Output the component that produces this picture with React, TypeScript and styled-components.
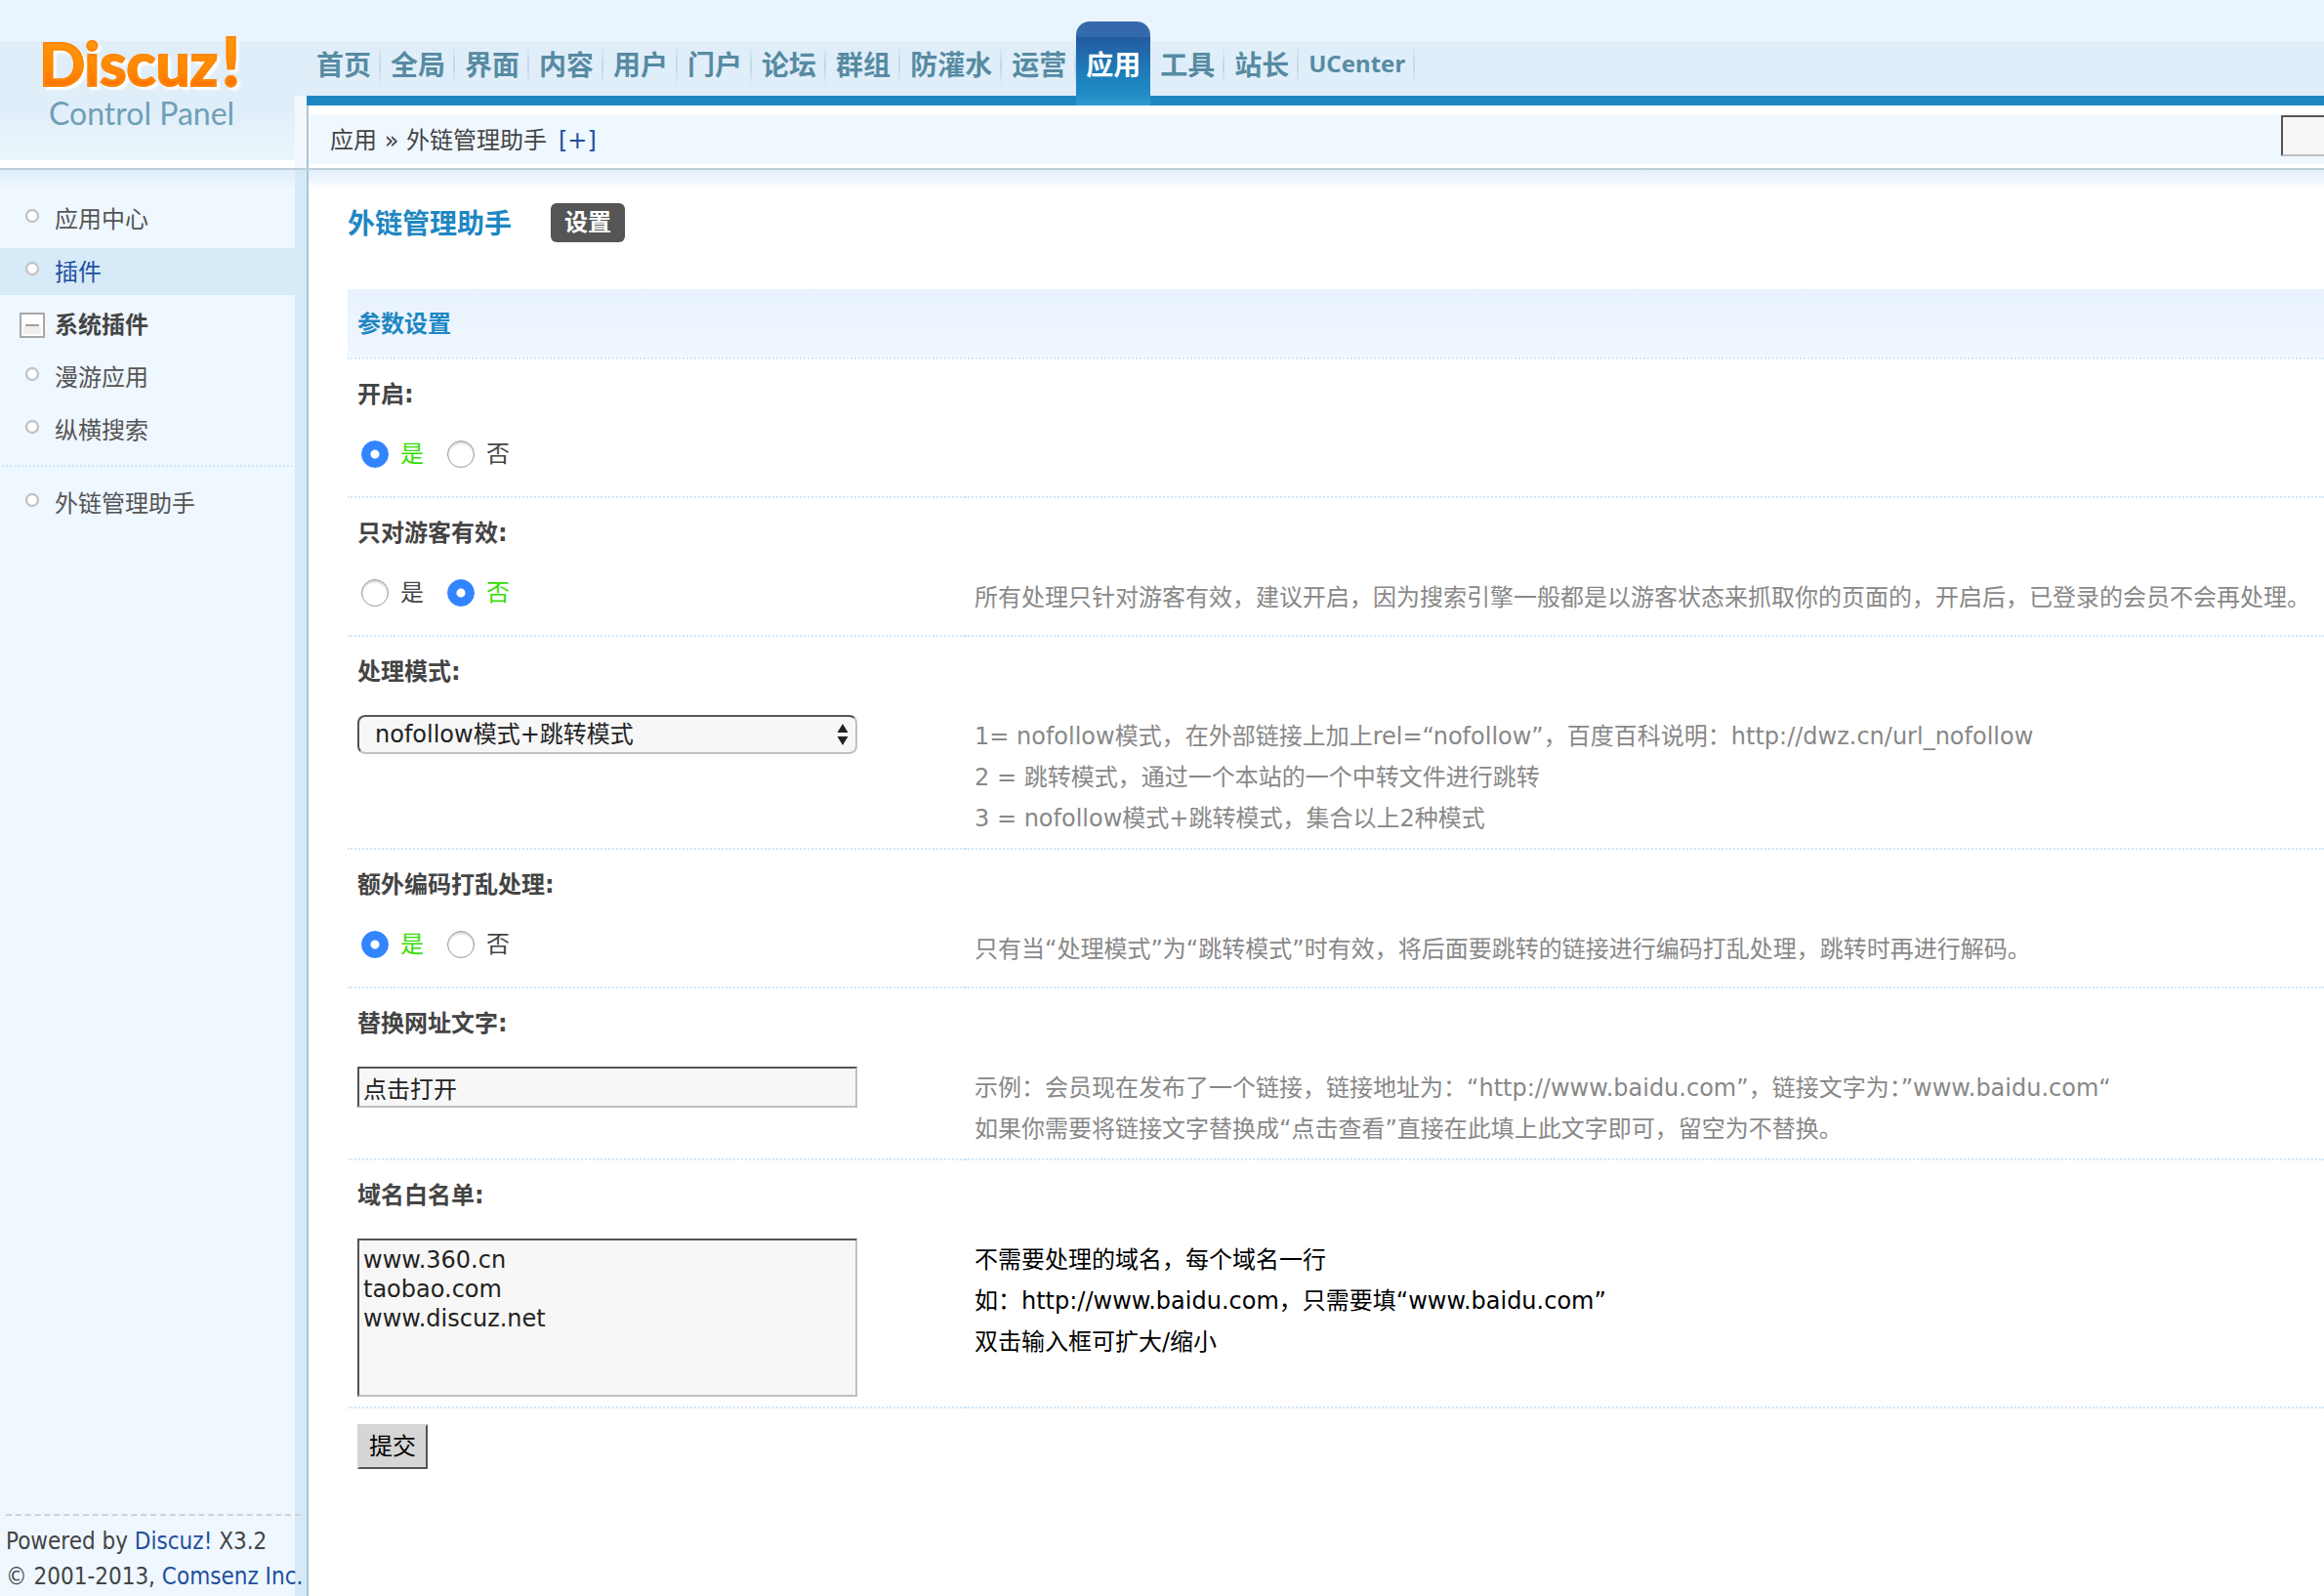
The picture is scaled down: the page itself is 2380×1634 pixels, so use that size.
import React, { useState } from 'react';
import styled, { createGlobalStyle, css } from 'styled-components';

const color = {
  text: '#444444',
  menuText: '#555555',
  link: '#1f4f9f',
  accent: '#1e87c3',
  muted: '#888888',
  nav: '#568ba2',
  line: '#bccfd9',
  edge: '#abc5d3',
  strip: '#d6e9f7',
  panel: '#eff7ff',
  dotted: '#d3e7f6',
};

const GlobalStyle = createGlobalStyle`
  *, *::before, *::after { box-sizing: border-box; }
  body {
    margin: 0;
    overflow-x: hidden;
    background: #ffffff;
    color: ${color.text};
    font-family: 'DejaVu Sans', 'Noto Sans CJK SC', sans-serif;
    font-size: 24px;
    line-height: 36px;
  }
  a { text-decoration: none; color: ${color.link}; }
  ul { list-style: none; margin: 0; padding: 0; }
`;

const cjk = css`
  font-family: 'Noto Sans CJK SC', sans-serif;
`;

const sunken = css`
  border: 2px solid;
  border-color: #545454 #c0c0c0 #c0c0c0 #545454;
  background: #f7f7f7;
  color: #222222;
  font: inherit;
  outline: none;
`;

const Page = styled.div`
  display: flex;
  flex-direction: column;
  min-height: 100vh;
`;

/* ---------- header ---------- */

const Header = styled.header`
  display: grid;
  grid-template-columns: 314px minmax(0, 1fr);
  border-bottom: 2px solid ${color.line};
  background: linear-gradient(#e9f4fd 42px, #e0eefa 42px, #e0eefa 110px, #ebf5fb 164px, #ffffff 164px);
`;

const LogoCell = styled.div`
  padding: 30px 12px 0 40px;
  background: linear-gradient(#f4f8fd, #f4f8fd) right bottom / 12px 74px no-repeat;
`;

const Logo = styled.a`
  display: block;
  font-family: Lato, sans-serif;
  white-space: nowrap;
`;

const LogoName = styled.span`
  display: flex;
  align-items: baseline;
  gap: 4px;
  height: 68px;
  font-size: 62px;
  font-weight: 700;
  line-height: 68px;
  color: transparent;
  background: linear-gradient(#ff960c 10px, #ff8a04 40px, #ff7200 58px);
  -webkit-background-clip: text;
  background-clip: text;
  -webkit-text-stroke: 2px #ff8606;
  filter: drop-shadow(3px 3px 1px #ffffff);
`;

const LogoMark = styled.span`
  font-size: 68px;
  line-height: 60px;
`;

const LogoTag = styled.span`
  display: block;
  padding-left: 10px;
  font-size: 32px;
  line-height: 36px;
  color: #6f9fb6;
`;

const Nav = styled.nav`
  height: 108px;
  background: linear-gradient(${color.accent}, ${color.accent}) left bottom / 100% 10px no-repeat;
`;

const NavList = styled.ul`
  display: flex;
  padding-top: 22px;
`;

const NavLink = styled.a<{ $active?: boolean; $latin?: boolean }>`
  display: block;
  height: 86px;
  padding: 0 10px;
  font-family: ${(p) => (p.$latin ? "'Noto Sans', sans-serif" : "'Noto Sans CJK SC', sans-serif")};
  font-size: ${(p) => (p.$latin ? '24px' : '28px')};
  font-weight: 700;
  line-height: 86px;
  white-space: nowrap;
  color: ${(p) => (p.$active ? '#ffffff' : color.nav)};
  border-radius: ${(p) => (p.$active ? '14px 14px 0 0' : '0')};
  background: ${(p) =>
    p.$active
      ? 'linear-gradient(#346aab 16px, #235ba0 16px, #1d80bd 56px, #1d88c2 70px, #309bd0)'
      : 'linear-gradient(#e0eefa, #c0d6e3 50%, #e0eefa) right 24px / 2px 42px no-repeat'};
`;

const CrumbBar = styled.div`
  display: flex;
  height: 64px;
  padding: 10px 0 4px 2px;
  background: #ffffff;
  border-left: 2px solid ${color.edge};
`;

const Crumbs = styled.div`
  flex: 1;
  padding-left: 20px;
  background: ${color.panel};
  line-height: 52px;
`;

const CrumbAdd = styled.a`
  margin-left: 12px;
`;

const SearchSlot = styled.form`
  flex: 0 0 44px;
  overflow: hidden;
  background: ${color.panel};
`;

const SearchInput = styled.input`
  ${sunken}
  display: block;
  width: 280px;
  height: 42px;
`;

/* ---------- sidebar ---------- */

const Body = styled.div`
  flex: 1;
  display: grid;
  grid-template-columns: 316px minmax(0, 1fr);
`;

const Sidebar = styled.aside`
  display: flex;
  flex-direction: column;
  padding-top: 23px;
  border-right: 2px solid ${color.edge};
  background:
    linear-gradient(${color.strip}, ${color.strip}) right top / 12px 100% no-repeat,
    linear-gradient(#e0eefa, #eff7ff 20px);
`;

const MenuList = styled.ul`
  margin-right: 12px;
  & + & {
    margin: 6px 14px 0 2px;
    padding: 10px 0 0;
    border-top: 2px dotted ${color.dotted};
  }
  & + & > li > * {
    padding-left: 18px;
  }
`;

const menuItem = css`
  display: flex;
  align-items: center;
  gap: 10px;
  width: 100%;
  height: 48px;
  margin: 3px 0 6px;
  padding: 2px 0 0 20px;
  line-height: 46px;
`;

const MenuLink = styled.a<{ $active?: boolean }>`
  ${menuItem}
  color: ${(p) => (p.$active ? color.link : color.menuText)};
  background: ${(p) => (p.$active ? '#d6eaf7' : 'transparent')};
`;

const MenuToggle = styled.button`
  ${menuItem}
  border: 0;
  background: none;
  color: ${color.text};
  font-family: inherit;
  font-size: 24px;
  font-weight: 700;
`;

const Icon = styled.svg`
  display: block;
  flex: none;
  width: 26px;
  height: 26px;
`;

const Footer = styled.footer`
  margin: auto 6px 0;
  padding: 8px 0 2px;
  border-top: 2px dashed #d2d2d2;
  font-family: 'DejaVu Sans Condensed', 'Noto Sans', sans-serif;
  white-space: nowrap;
`;

/* ---------- content ---------- */

const Main = styled.main`
  padding: 34px 0 0 40px;
  background: linear-gradient(#e0eefa, #ffffff 20px);
`;

const TitleRow = styled.div`
  display: flex;
  align-items: center;
  gap: 40px;
  height: 40px;
  margin-bottom: 48px;
`;

const Title = styled.h1`
  margin: 0;
  padding-bottom: 2px;
  ${cjk}
  font-size: 28px;
  line-height: 38px;
  color: ${color.accent};
`;

const TabLink = styled.a`
  padding: 0 14px;
  border-radius: 6px;
  background: #555555;
  color: #ffffff;
  font-weight: 700;
  line-height: 40px;
`;

const SectionTitle = styled.h2`
  margin: 0;
  padding: 2px 10px 0;
  border-bottom: 2px dotted ${color.dotted};
  background: linear-gradient(#e8f3fd, #f1f6ff) padding-box;
  font-size: 24px;
  line-height: 68px;
  color: ${color.accent};
`;

const Field = styled.div`
  display: grid;
  grid-template-columns: 632px minmax(0, 1fr);
`;

const fieldName = css`
  grid-column: 1 / -1;
  display: block;
  padding: 18px 10px 26px;
  font-weight: 700;
`;

const FieldLabel = styled.label`
  ${fieldName}
`;

const FieldTitle = styled.span`
  ${fieldName}
`;

const FieldControl = styled.div`
  min-height: 62px;
  padding: 0 10px 10px;
  border-bottom: 2px dotted ${color.dotted};
`;

const Help = styled.div<{ $strong?: boolean }>`
  padding: 1px 10px 9px;
  border-bottom: 2px dotted ${color.dotted};
  line-height: 42px;
  white-space: pre;
  color: ${(p) => (p.$strong ? '#000000' : color.muted)};
`;

const RadioGroup = styled.div`
  display: flex;
  gap: 24px;
  padding-left: 4px;
`;

const RadioLabel = styled.label<{ $on: boolean }>`
  display: flex;
  align-items: center;
  gap: 12px;
  height: 34px;
  color: ${(p) => (p.$on ? '#33dd00' : color.text)};
`;

const Radio = styled.input`
  appearance: none;
  width: 28px;
  height: 28px;
  margin: 0;
  border: 1px solid #999999;
  border-radius: 50%;
  background: #ffffff;
  box-shadow: inset 0 2px 2px #d4d4d4;
  &:checked {
    border-color: #3385ff;
    background: radial-gradient(circle, #ffffff 4px, #3385ff 5px);
    box-shadow: none;
  }
`;

const SelectWrap = styled.div`
  position: relative;
  width: 512px;
`;

const Select = styled.select`
  ${sunken}
  appearance: none;
  display: block;
  width: 100%;
  height: 40px;
  padding: 0 40px 0 16px;
  border-radius: 8px;
`;

const SelectArrows = styled.svg`
  position: absolute;
  top: 9px;
  right: 9px;
  width: 12px;
  height: 22px;
  pointer-events: none;
`;

const TextInput = styled.input`
  ${sunken}
  display: block;
  width: 512px;
  height: 42px;
  padding: 0 4px;
`;

const TextArea = styled.textarea`
  ${sunken}
  display: block;
  width: 512px;
  height: 162px;
  padding: 5px 4px;
  line-height: 30px;
  resize: none;
`;

const Submit = styled.button`
  display: block;
  height: 46px;
  margin: 16px 10px;
  padding: 0 10px;
  border: 2px solid;
  border-color: #d6d6d6 #545454 #545454 #d6d6d6;
  background: #d6d6d6;
  color: #000000;
  font: inherit;
`;

const navItems = ['首页', '全局', '界面', '内容', '用户', '门户', '论坛', '群组', '防灌水', '运营', '应用', '工具', '站长', 'UCenter'];

function Bullet() {
  return (
    <Icon viewBox="0 0 26 26" aria-hidden="true">
      <circle cx="13" cy="9" r="6" fill="#fff" stroke="#c2c5c7" strokeWidth="2.4" />
    </Icon>
  );
}

function Minus() {
  return (
    <Icon viewBox="0 0 26 26" aria-hidden="true">
      <rect x="1" y="1" width="24" height="24" fill="#fff" stroke="#a8a8a8" strokeWidth="2" />
      <rect x="4" y="14" width="18" height="8" fill="#eeeeee" />
      <rect x="6" y="12" width="14" height="2" fill="#a0a0a0" />
    </Icon>
  );
}

function MenuEntry({ label, active }: { label: string; active?: boolean }) {
  return (
    <li>
      <MenuLink href="#" $active={active}>
        <Bullet />
        {label}
      </MenuLink>
    </li>
  );
}

function YesNoField({ name, title, initial, help }: { name: string; title: string; initial: string; help: string }) {
  const [value, setValue] = useState(initial);
  return (
    <Field role="radiogroup" aria-labelledby={`${name}-title`}>
      <FieldTitle id={`${name}-title`}>{title}</FieldTitle>
      <FieldControl>
        <RadioGroup>
          {['是', '否'].map((option) => (
            <RadioLabel key={option} $on={value === option}>
              <Radio
                type="radio"
                name={name}
                value={option}
                checked={value === option}
                onChange={() => setValue(option)}
              />
              {option}
            </RadioLabel>
          ))}
        </RadioGroup>
      </FieldControl>
      <Help>{help}</Help>
    </Field>
  );
}

export default function App() {
  return (
    <Page>
      <GlobalStyle />
      <Header>
        <LogoCell>
          <Logo href="#">
            <LogoName>
              Discuz<LogoMark>!</LogoMark>
            </LogoName>
            <LogoTag>Control Panel</LogoTag>
          </Logo>
        </LogoCell>
        <div>
          <Nav>
            <NavList>
              {navItems.map((item) => (
                <li key={item}>
                  <NavLink href="#" $active={item === '应用'} $latin={item === 'UCenter'}>
                    {item}
                  </NavLink>
                </li>
              ))}
            </NavList>
          </Nav>
          <CrumbBar>
            <Crumbs>
              应用 » 外链管理助手
              <CrumbAdd href="#">[+]</CrumbAdd>
            </Crumbs>
            <SearchSlot>
              <SearchInput type="text" aria-label="搜索" />
            </SearchSlot>
          </CrumbBar>
        </div>
      </Header>

      <Body>
        <Sidebar>
          <MenuList>
            <MenuEntry label="应用中心" />
            <MenuEntry label="插件" active />
            <li>
              <MenuToggle type="button">
                <Minus />
                系统插件
              </MenuToggle>
            </li>
            <MenuEntry label="漫游应用" />
            <MenuEntry label="纵横搜索" />
          </MenuList>
          <MenuList>
            <MenuEntry label="外链管理助手" />
          </MenuList>
          <Footer>
            <div>
              Powered by <a href="#">Discuz!</a> X3.2
            </div>
            <div>
              © 2001-2013, <a href="#">Comsenz Inc.</a>
            </div>
          </Footer>
        </Sidebar>

        <Main>
          <TitleRow>
            <Title>外链管理助手</Title>
            <TabLink href="#">设置</TabLink>
          </TitleRow>
          <SectionTitle>参数设置</SectionTitle>
          <form>
            <YesNoField name="enabled" title="开启:" initial="是" help="" />
            <YesNoField
              name="guest"
              title="只对游客有效:"
              initial="否"
              help="所有处理只针对游客有效，建议开启，因为搜索引擎一般都是以游客状态来抓取你的页面的，开启后，已登录的会员不会再处理。"
            />
            <Field>
              <FieldLabel htmlFor="mode">处理模式:</FieldLabel>
              <FieldControl>
                <SelectWrap>
                  <Select id="mode" defaultValue="3">
                    <option value="1">nofollow模式</option>
                    <option value="2">跳转模式</option>
                    <option value="3">nofollow模式+跳转模式</option>
                  </Select>
                  <SelectArrows viewBox="0 0 12 22" aria-hidden="true">
                    <path d="M6 0 L11.5 9 H0.5 Z M6 22 L11.5 13 H0.5 Z" fill="#222" />
                  </SelectArrows>
                </SelectWrap>
              </FieldControl>
              <Help>
                {'1= nofollow模式，在外部链接上加上rel=“nofollow”，百度百科说明：http://dwz.cn/url_nofollow\n2 = 跳转模式，通过一个本站的一个中转文件进行跳转\n3 = nofollow模式+跳转模式，集合以上2种模式'}
              </Help>
            </Field>
            <YesNoField
              name="encode"
              title="额外编码打乱处理:"
              initial="是"
              help="只有当“处理模式”为“跳转模式”时有效，将后面要跳转的链接进行编码打乱处理，跳转时再进行解码。"
            />
            <Field>
              <FieldLabel htmlFor="replace">替换网址文字:</FieldLabel>
              <FieldControl>
                <TextInput id="replace" type="text" defaultValue="点击打开" />
              </FieldControl>
              <Help>
                {'示例：会员现在发布了一个链接，链接地址为：“http://www.baidu.com”，链接文字为：”www.baidu.com“\n如果你需要将链接文字替换成“点击查看”直接在此填上此文字即可，留空为不替换。'}
              </Help>
            </Field>
            <Field>
              <FieldLabel htmlFor="whitelist">域名白名单:</FieldLabel>
              <FieldControl>
                <TextArea id="whitelist" defaultValue={'www.360.cn\ntaobao.com\nwww.discuz.net'} />
              </FieldControl>
              <Help $strong>
                {'不需要处理的域名，每个域名一行\n如：http://www.baidu.com，只需要填“www.baidu.com”\n双击输入框可扩大/缩小'}
              </Help>
            </Field>
            <Submit type="button">提交</Submit>
          </form>
        </Main>
      </Body>
    </Page>
  );
}
